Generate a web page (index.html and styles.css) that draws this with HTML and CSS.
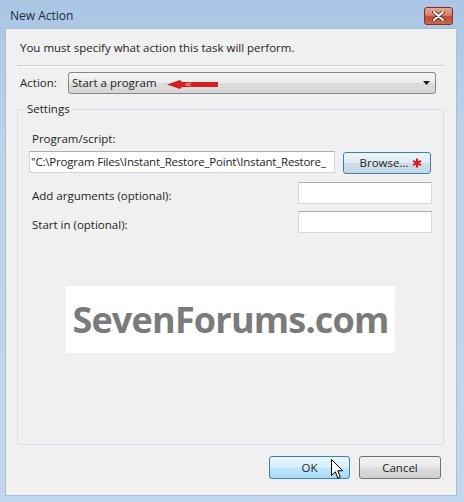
FILE: index.html
```
<!DOCTYPE html>
<html>
<head>
<meta charset="utf-8">
<title>New Action</title>
<link rel="stylesheet" href="styles.css">
</head>
<body>
<div class="window">
  <div class="titlebar">
    <div class="title">New Action</div>
    <div class="close">
      <svg width="13" height="10" viewBox="0 0 13 10"><path d="M2 1 L11 9 M11 1 L2 9" stroke="#5a2418" stroke-width="3.6" stroke-linecap="round"/><path d="M2 1 L11 9 M11 1 L2 9" stroke="#ffffff" stroke-width="2" stroke-linecap="round"/></svg>
    </div>
  </div>
  <div class="client">
    <div class="intro">You must specify what action this task will perform.</div>
    <div class="sep"></div>
    <div class="action-row">
      <span class="action-label">Action:</span>
      <div class="combo">
        <span class="combo-text">Start a program</span>
        <svg class="combo-arrow" width="7" height="4" viewBox="0 0 7 4"><path d="M0 0 H7 L3.5 4 Z" fill="#1a1a1a"/></svg>
        <svg class="red-arrow" width="52" height="11" viewBox="0 0 52 11"><path d="M0 5.5 L13 1 L15 3 L51 3 L51 8 L15 8 L13 10 Z" fill="#d42020"/><path d="M24 4 L18 5.5 L24 7" fill="none" stroke="#f0a8a8" stroke-width="1"/></svg>
      </div>
    </div>
    <fieldset class="group">
      <legend class="group-title">Settings</legend>
      <div class="group-body">
        <div class="field-label">Program/script:</div>
        <div class="path-row">
          <div class="textbox path">"C:\Program Files\Instant_Restore_Point\Instant_Restore_</div>
          <div class="btn browse">Browse... <svg width="10" height="10" viewBox="0 0 10 10"><path d="M5 0.5 V9.5 M1 2.8 L9 7.2 M9 2.8 L1 7.2" stroke="#e01a1a" stroke-width="2"/></svg></div>
        </div>
        <div class="opt-row first">
          <span class="opt-label">Add arguments (optional):</span>
          <div class="textbox small"></div>
        </div>
        <div class="opt-row">
          <span class="opt-label">Start in (optional):</span>
          <div class="textbox small"></div>
        </div>
        <div class="logo">SevenForums.com</div>
      </div>
    </fieldset>
    <div class="buttons">
      <div class="btn ok">OK
        <svg class="cursor" width="13" height="21" viewBox="0 0 13 21"><path d="M0.5 0.5 L0.5 16.5 L4.3 12.8 L6.8 19 L9.3 18 L6.8 11.8 L11.8 11.8 Z" fill="#ffffff" stroke="#000000" stroke-width="1" stroke-linejoin="miter"/></svg>
      </div>
      <div class="btn cancel">Cancel</div>
    </div>
  </div>
</div>
</body>
</html>
```
FILE: styles.css
```
html, body {
  margin: 0;
  padding: 0;
}
body {
  width: 464px;
  height: 502px;
  overflow: hidden;
  font-family: "Open Sans", "Noto Sans", "DejaVu Sans", sans-serif;
  font-size: 11.5px;
  color: #1e1e1e;
}
.window {
  width: 464px;
  height: 502px;
  display: flex;
  flex-direction: column;
  background: linear-gradient(to bottom, #aac6e4 0%, #bcd3ec 30%, #c2d7ee 100%);
  box-sizing: border-box;
}
.titlebar {
  height: 28px;
  display: flex;
  align-items: flex-start;
  padding-left: 10px;
  box-sizing: border-box;
}
.title {
  margin-top: 8px;
  line-height: 16px;
  font-size: 12px;
  color: #1b2a48;
}
.close {
  margin-left: auto;
  margin-right: 11px;
  margin-top: 7px;
  width: 29px;
  height: 18px;
  box-sizing: border-box;
  border: 1px solid #7d2f22;
  border-radius: 3px;
  background: linear-gradient(to bottom, #e9a898 0%, #d7806c 45%, #c34a32 55%, #c96a52 100%);
  display: flex;
  align-items: center;
  justify-content: center;
}
.client {
  margin: 0 7px 6px 5px;
  flex: 1;
  background: #f0f0f0;
  border: 1px solid #a9bfd6;
  display: flex;
  flex-direction: column;
  box-sizing: border-box;
}
.intro {
  margin-top: 11px;
  padding-left: 14px;
  line-height: 16px;
}
.sep {
  margin: 9px 12px 0 11px;
  border-top: 1px solid #c9c9c9;
  border-bottom: 1px solid #ffffff;
}
.action-row {
  margin-top: 5px;
  padding-left: 14px;
  display: flex;
  align-items: center;
}
.action-label {
  width: 48px;
  line-height: 16px;
}
.combo {
  position: relative;
  width: 368px;
  height: 22px;
  box-sizing: border-box;
  border: 1px solid #858585;
  border-radius: 3px;
  background: linear-gradient(to bottom, #f6f6f6 0%, #ececec 48%, #dddddd 52%, #d6d6d6 100%);
  display: flex;
  align-items: center;
  padding-left: 3px;
}
.combo-text {
  line-height: 16px;
}
.combo-arrow {
  margin-left: auto;
  margin-right: 5px;
}
.red-arrow {
  position: absolute;
  left: 98px;
  top: 6px;
}
.group {
  margin: 7px 12px 0 11px;
  padding: 0 11px 0 11px;
  border: 1px solid #d5dfe5;
  border-radius: 2px;
  flex: 1;
  min-width: 0;
  box-sizing: border-box;
}
.group-title {
  margin-left: -3px;
  padding: 0 1px;
  line-height: 16px;
}
.group-body {
  display: flex;
  flex-direction: column;
}
.field-label {
  margin-top: 14px;
  padding-left: 3px;
  line-height: 16px;
}
.path-row {
  margin-top: 4px;
  display: flex;
  align-items: flex-start;
  gap: 8px;
}
.textbox {
  height: 22px;
  box-sizing: border-box;
  background: #ffffff;
  border: 1px solid #d5d9df;
  border-top-color: #abadb3;
}
.textbox.path {
  width: 306px;
  padding-left: 1px;
  line-height: 20px;
  white-space: nowrap;
  letter-spacing: -0.2px;
}
.btn {
  box-sizing: border-box;
  border: 1px solid #707070;
  border-radius: 3px;
  display: flex;
  align-items: center;
  justify-content: center;
  gap: 4px;
  line-height: 16px;
  background: linear-gradient(to bottom, #f2f2f2 0%, #ebebeb 48%, #dddddd 52%, #cfcfcf 100%);
}
.browse {
  margin-top: 1px;
  width: 88px;
  height: 22px;
  border-color: #3c7fb1;
  background: linear-gradient(to bottom, #eef5fa 0%, #e0ecf4 48%, #cfdde8 52%, #c4d6e4 100%);
  padding-left: 8px;
}
.opt-row {
  margin-top: 7px;
  display: flex;
  align-items: center;
}
.opt-row.first {
  margin-top: 8px;
}
.opt-label {
  padding-left: 3px;
  padding-top: 5px;
  line-height: 16px;
  flex: 1;
}
.textbox.small {
  width: 134px;
}
.logo {
  align-self: center;
  margin-top: 53px;
  width: 329px;
  height: 67px;
  background: #ffffff;
  display: flex;
  align-items: center;
  justify-content: center;
  font-family: "Open Sans", "Noto Sans", sans-serif;
  font-weight: 700;
  font-size: 36px;
  letter-spacing: -0.8px;
  color: #7b7b7b;
}
.buttons {
  margin: 11px 15px 16px 0;
  display: flex;
  justify-content: flex-end;
  gap: 9px;
}
.ok {
  position: relative;
  width: 81px;
  height: 23px;
  border-color: #3c7fb1;
  background: linear-gradient(to bottom, #eaf6fd 0%, #d9f0fc 48%, #bee6fd 52%, #a7d9f5 100%);
}
.cancel {
  width: 82px;
  height: 23px;
}
.cursor {
  position: absolute;
  left: 61px;
  top: 2px;
}
```
